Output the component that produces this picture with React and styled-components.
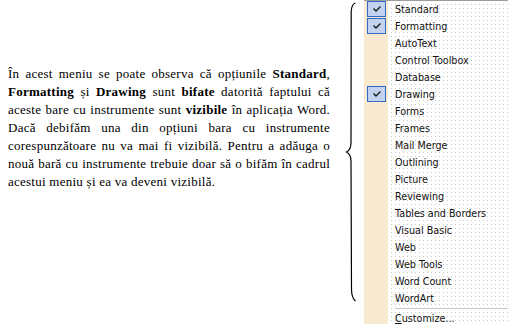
import React from "react";
import styled, { createGlobalStyle } from "styled-components";

const Global = createGlobalStyle`
  html, body { margin: 0; padding: 0; background: #fff; }
  body { width: 508px; height: 324px; overflow: hidden; }
`;

const Page = styled.div`
  display: flex;
  width: 508px;
  height: 324px;
  background: #fff;
`;

const TextColumn = styled.div`
  width: 336px;
  padding-left: 8px;
  box-sizing: border-box;
`;

const Paragraph = styled.div`
  margin-top: 65px;
  width: 322px;
  font-family: "Liberation Serif", "Times New Roman", serif;
  font-size: 13px;
  letter-spacing: 0.25px;
  line-height: 18px;
  color: #000;
  b { font-weight: bold; }
`;

const Line = styled.div`
  white-space: nowrap;
  text-align: ${(p) => (p.$last ? "left" : "justify")};
  text-align-last: ${(p) => (p.$last ? "left" : "justify")};
`;

const Brace = styled.svg`
  width: 28px;
  height: 324px;
  flex: none;
`;

const Menu = styled.div`
  flex: 1;
  position: relative;
  display: flex;
  flex-direction: column;
  border-top: 1px solid #9d9d9d;
  background:
    linear-gradient(90deg, #fff 3px, transparent 3px) 0 0 / 4px 4px,
    linear-gradient(#fff 3px, #c9c9c9 3px) 0 0 / 4px 4px;
  font-family: "DejaVu Sans", Tahoma, sans-serif;
  font-size: 9.6px;
  color: #111;

  &::before {
    content: "";
    position: absolute;
    left: 0;
    top: 0;
    bottom: 0;
    width: 24px;
    background:
      linear-gradient(90deg, transparent 1px, #f8eecb 1px) 0 0 / 2px 2px,
      linear-gradient(#f8dfdc 1px, #f8eecb 1px) 0 0 / 2px 2px;
  }
`;

const Row = styled.div`
  position: relative;
  display: flex;
  align-items: center;
  height: 17px;
  flex: none;
`;

const Strip = styled.div`
  width: 24px;
  height: 100%;
  flex: none;
  display: flex;
  align-items: flex-start;
  justify-content: center;
`;

const Check = styled.div`
  width: 19px;
  height: 16px;
  box-sizing: border-box;
  margin-left: 1px;
  border: 1px solid #316ac5;
  background: #c3d3ef;
  display: flex;
  align-items: center;
  justify-content: center;
`;

const Label = styled.span`
  padding-left: 7px;
  white-space: nowrap;
  u { text-decoration: underline; }
`;

const SepRow = styled.div`
  position: relative;
  display: flex;
  height: 3px;
  flex: none;
`;

const SepLine = styled.div`
  flex: 1;
  margin-left: 31px;
  margin-top: 1px;
  height: 0;
  border-top: 1px solid #c6c6c6;
`;

const items = [
  ["Standard", true],
  ["Formatting", true],
  ["AutoText", false],
  ["Control Toolbox", false],
  ["Database", false],
  ["Drawing", true],
  ["Forms", false],
  ["Frames", false],
  ["Mail Merge", false],
  ["Outlining", false],
  ["Picture", false],
  ["Reviewing", false],
  ["Tables and Borders", false],
  ["Visual Basic", false],
  ["Web", false],
  ["Web Tools", false],
  ["Word Count", false],
  ["WordArt", false],
];

const Tick = () => (
  <svg width="8" height="6" viewBox="0 0 8 6">
    <path d="M0.5 2.5 L3 5 L7.5 0.5" fill="none" stroke="#1a1a1a" strokeWidth="1.4" />
  </svg>
);

export default function App() {
  return (
    <>
      <Global />
      <Page>
        <TextColumn>
          <Paragraph>
            <Line>În acest meniu se poate observa că opțiunile <b>Standard</b>,</Line>
            <Line><b>Formatting</b> și <b>Drawing</b> sunt <b>bifate</b> datorită faptului că</Line>
            <Line>aceste bare cu instrumente sunt <b>vizibile</b> în aplicația Word.</Line>
            <Line>Dacă debifăm una din opțiuni bara cu instrumente</Line>
            <Line>corespunzătoare nu va mai fi vizibilă. Pentru a adăuga o</Line>
            <Line>nouă bară cu instrumente trebuie doar să o bifăm în cadrul</Line>
            <Line $last>acestui meniu și ea va deveni vizibilă.</Line>
          </Paragraph>
        </TextColumn>
        <Brace viewBox="0 0 28 324">
          <path
            d="M19.5 3 Q15.5 4 15.2 12 L15 143 Q14.8 150 10.5 152 Q14.8 154 15 161 L15.5 290 Q15.8 298 19.5 301"
            fill="none"
            stroke="#000"
            strokeWidth="1.2"
          />
        </Brace>
        <Menu>
          {items.map(([name, checked]) => (
            <Row key={name}>
              <Strip>{checked && <Check><Tick /></Check>}</Strip>
              <Label>{name}</Label>
            </Row>
          ))}
          <SepRow>
            <SepLine />
          </SepRow>
          <Row>
            <Strip />
            <Label>
              <u>C</u>ustomize...
            </Label>
          </Row>
        </Menu>
      </Page>
    </>
  );
}
